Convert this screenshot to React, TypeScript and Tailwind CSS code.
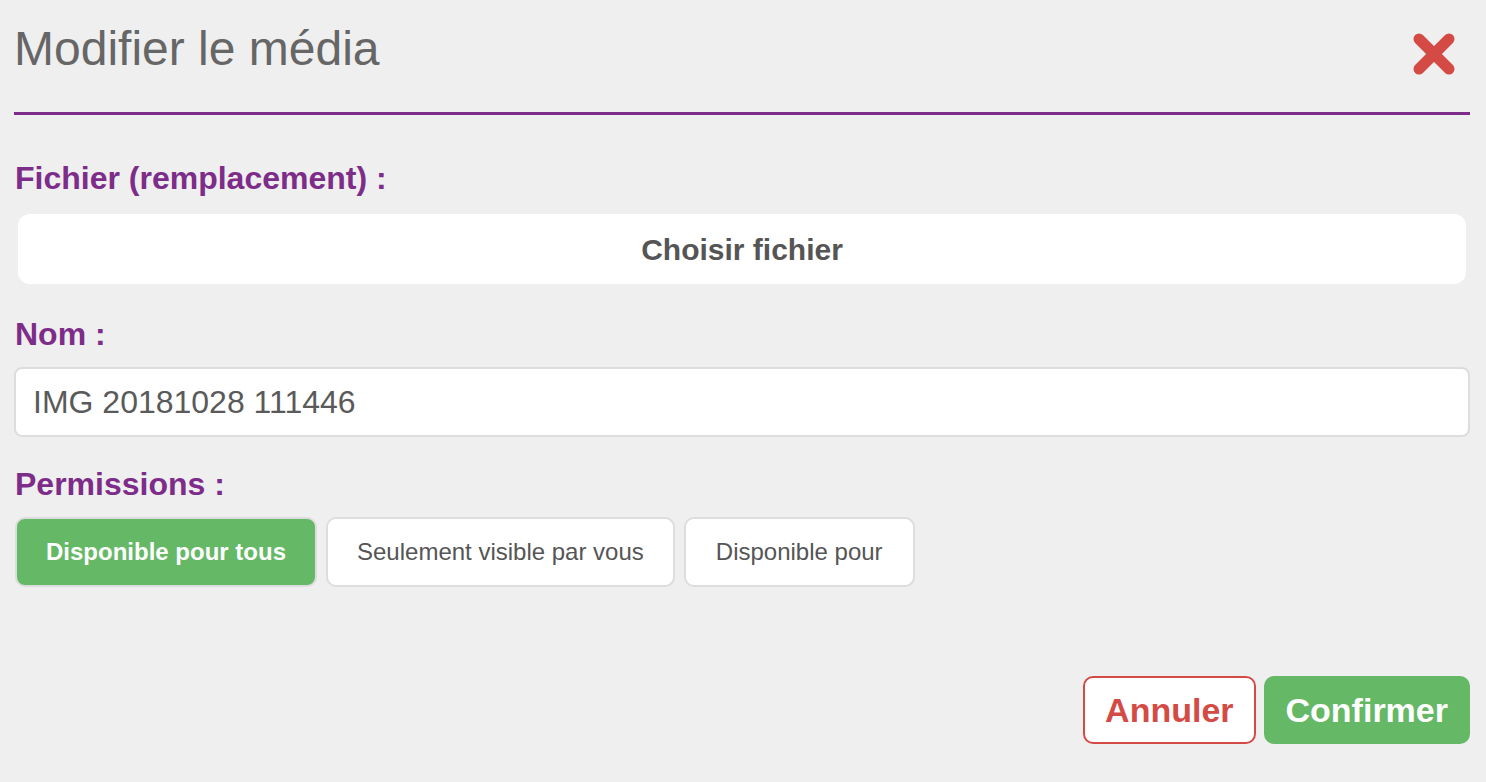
import React from 'react';

const font = { fontFamily: '"Liberation Sans", Arial, Helvetica, sans-serif' };

export default function App() {
  return (
    <div className="min-h-screen w-full bg-[#efefef] pl-[14px] pr-[16px]" style={font}>
      {/* header */}
      <div className="h-[115px] border-b-[3px] border-[#7d2d89] flex items-start justify-between pt-[25px]">
        <h1 className="text-[48px] leading-none text-[#666666]">Modifier le média</h1>
        <button className="mt-[8px] mr-[15px]" aria-label="Fermer">
          <svg width="42" height="42" viewBox="0 0 42 42">
            <path d="M6 6 L36 36 M36 6 L6 36" stroke="#d44b45" strokeWidth="11" strokeLinecap="round" fill="none" />
          </svg>
        </button>
      </div>

      {/* fichier */}
      <label className="block mt-[47px] text-[32px] leading-none font-bold text-[#7d2d89] pl-[1px]">Fichier (remplacement) :</label>
      <div className="mt-[20px] mx-[4px] h-[70px] rounded-[12px] bg-white flex items-center justify-center">
        <span className="text-[30px] font-bold text-[#555555]">Choisir fichier</span>
      </div>

      {/* nom */}
      <label className="block mt-[34px] text-[32px] leading-none font-bold text-[#7d2d89] pl-[1px]">Nom :</label>
      <div className="mt-[17px] h-[70px] rounded-[8px] bg-white border-2 border-[#dddddd] flex items-center pl-[17px]">
        <span className="text-[32px] text-[#5a5a5a]">IMG 20181028 111446</span>
      </div>

      {/* permissions */}
      <label className="block mt-[31px] text-[32px] leading-none font-bold text-[#7d2d89] pl-[1px]">Permissions :</label>
      <div className="mt-[17px] flex gap-[9px] pl-[1px]">
        <button className="h-[70px] px-[29px] rounded-[10px] bg-[#64b866] border-2 border-[#dddddd] text-white font-bold text-[24px]">
          Disponible pour tous
        </button>
        <button className="h-[70px] px-[29px] rounded-[10px] bg-white border-2 border-[#dddddd] text-[#555555] text-[24px]">
          Seulement visible par vous
        </button>
        <button className="h-[70px] px-[30px] rounded-[10px] bg-white border-2 border-[#dddddd] text-[#555555] text-[24px]">
          Disponible pour
        </button>
      </div>

      {/* actions */}
      <div className="mt-[89px] flex justify-end gap-[8px]">
        <button className="h-[68px] px-[20px] rounded-[10px] bg-white border-2 border-[#d44b45] text-[#d44b45] font-bold text-[34px]">
          Annuler
        </button>
        <button className="h-[68px] px-[22px] rounded-[10px] bg-[#64b866] text-white font-bold text-[34px]">
          Confirmer
        </button>
      </div>
    </div>
  );
}
